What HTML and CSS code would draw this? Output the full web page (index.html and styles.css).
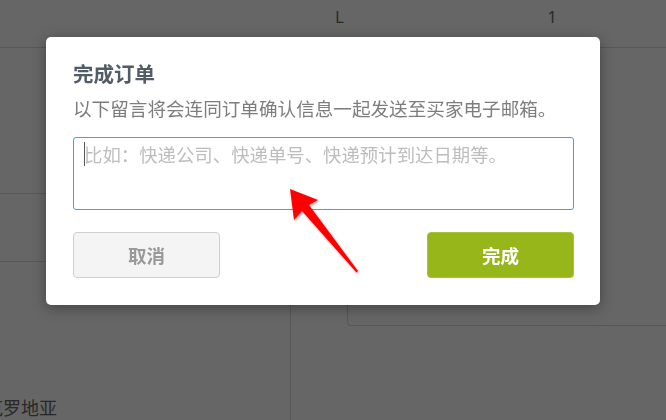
FILE: index.html
```html
<!DOCTYPE html>
<html lang="zh-CN">
<head>
  <meta charset="UTF-8">
  <title>完成订单</title>
  <link rel="stylesheet" href="styles.css">
</head>
<body>
  <div class="page">
    <div class="page-head">
      <span class="col-size">L</span>
      <span class="col-qty">1</span>
    </div>
    <div class="page-body">
      <div class="side">
        <div class="side-row"></div>
        <div class="side-row short"></div>
        <div class="country">克罗地亚</div>
      </div>
      <div class="main">
        <div class="summary-box"></div>
      </div>
    </div>
  </div>

  <div class="overlay"></div>

  <div class="modal">
    <h2>完成订单</h2>
    <p class="hint">以下留言将会连同订单确认信息一起发送至买家电子邮箱。</p>
    <div class="note-wrap">
      <textarea class="note" placeholder="比如：快递公司、快递单号、快递预计到达日期等。"></textarea>
      <span class="caret"></span>
    </div>
    <div class="actions">
      <button class="btn btn-cancel">取消</button>
      <button class="btn btn-done">完成</button>
    </div>
  </div>

  <svg class="arrow" width="666" height="420" viewBox="0 0 666 420">
    <defs>
      <filter id="shade" x="-20%" y="-20%" width="140%" height="140%">
        <feDropShadow dx="1" dy="1.5" stdDeviation="1.2" flood-color="#000" flood-opacity="0.35"/>
      </filter>
    </defs>
    <polygon filter="url(#shade)" fill="#ff0000"
      points="290,189 318,200 309,205 358,271 356.5,272.5 302,211 294,220"/>
  </svg>
</body>
</html>
```

FILE: styles.css
```css
* {
  box-sizing: border-box;
}

body {
  margin: 0;
  width: 666px;
  height: 420px;
  overflow: hidden;
  background-color: #fff;
  font-family: "Noto Sans CJK SC", "Noto Sans", sans-serif;
}

/* page behind the dialog */
.page {
  height: 420px;
  color: #666;
}

.page-head {
  height: 48px;
  border-bottom: 1px solid #dcdcdc;
  font-family: "Open Sans", sans-serif;
  font-size: 17px;
  line-height: 24px;
  display: grid;
  grid-template-columns: 335px 222px 1fr;
  padding-top: 5px;
}

.col-size {
  grid-column: 2;
  grid-row: 1;
}

.col-qty {
  grid-column: 2;
  grid-row: 1;
  justify-self: end;
}

.page-body {
  display: grid;
  grid-template-columns: 291px 1fr;
  height: 372px;
}

.side {
  border-right: 1px solid #dcdcdc;
  display: flex;
  flex-direction: column;
}

.side-row {
  height: 146px;
  border-bottom: 1px solid #dcdcdc;
}

.side-row.short {
  height: 68px;
}

.country {
  margin-top: auto;
  margin-left: -15px;
  font-size: 18px;
  line-height: 26px;
}

.main {
  padding-left: 56px;
}

.summary-box {
  height: 278px;
  border: 1px solid #d8d8d8;
  border-top: none;
  border-right: none;
  border-radius: 0 0 0 4px;
}

.overlay {
  position: fixed;
  inset: 0;
  background: rgba(0, 0, 0, 0.6);
}

/* dialog */
.modal {
  position: absolute;
  left: 46px;
  top: 37px;
  width: 554px;
  height: 268px;
  background: #fff;
  border-radius: 5px;
  box-shadow: 0 3px 14px rgba(0, 0, 0, 0.35);
  padding: 24px 26px 27px 27px;
}

.modal h2 {
  margin: 0;
  font-size: 20.5px;
  line-height: 24px;
  font-weight: bold;
  color: #525c66;
}

.hint {
  margin: 11px 0 17px;
  font-size: 18.6px;
  line-height: 24px;
  color: #7d7d7d;
}

.note-wrap {
  position: relative;
  width: 501px;
  height: 73px;
  border: 1px solid #22b0ee;
  border-radius: 3px;
}

.note {
  display: block;
  width: 100%;
  height: 100%;
  margin: 0;
  padding: 4px 10px;
  border: none;
  background: transparent;
  outline: none;
  resize: none;
  font-family: inherit;
  font-size: 18.4px;
  line-height: 24px;
  color: #333;
}

.note::placeholder {
  color: #bdbdbd;
}

.caret {
  position: absolute;
  left: 10px;
  top: 4px;
  width: 1px;
  height: 24px;
  background: #555;
}

.actions {
  display: flex;
  justify-content: space-between;
  margin-top: 22px;
}

.btn {
  width: 147px;
  height: 46px;
  border-radius: 4px;
  font-family: inherit;
  font-size: 18.5px;
  font-weight: bold;
  cursor: pointer;
}

.btn-cancel {
  background: #f4f4f4;
  border: 1px solid #cfcfcf;
  color: #999;
}

.btn-done {
  background: #96b61a;
  border: 1px solid #a6c33a;
  color: #fff;
}

.arrow {
  position: absolute;
  left: 0;
  top: 0;
  pointer-events: none;
}
```
